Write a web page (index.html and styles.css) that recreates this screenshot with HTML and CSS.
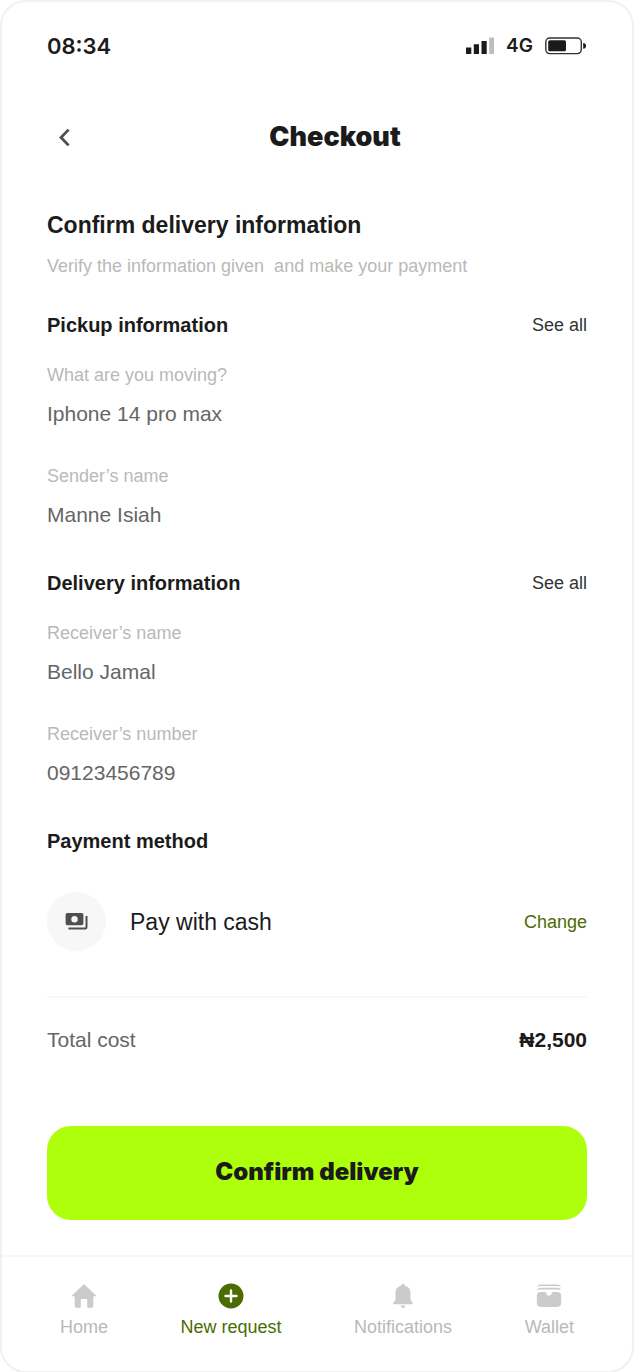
FILE: index.html
```html
<!DOCTYPE html>
<html lang="en">
<head>
<meta charset="utf-8">
<meta name="viewport" content="width=device-width, initial-scale=1">
<title>Checkout</title>
<link rel="stylesheet" href="styles.css">
</head>
<body>
<div class="screen">
  <div class="status">
    <span class="status-time">08:34</span>
    <div class="status-right">
      <svg width="28" height="18" viewBox="0 0 28 18" aria-hidden="true">
        <path fill="#1b1b1b" d="M0 10.5h5.300V17H0zM7.800 7.200h5.200V17H7.800zM15.500 4h5.200v13h-5.200z"/>
        <path fill="#bdbdbd" d="M23.200.5h4.800V17h-4.800z"/>
      </svg>
      <span class="status-net">4G</span>
      <svg width="42" height="18" viewBox="0 0 42 18" aria-hidden="true">
        <rect x=".8" y="1" width="35.500" height="15.600" rx="4" fill="none" stroke="#333" stroke-width="1.400"/>
        <rect x="3.200" y="3.300" width="17.800" height="11" rx="1.600" fill="#1b1b1b"/>
        <path d="M38.200 6q2.800.4 2.800 2.900t-2.800 2.900z" fill="#1b1b1b"/>
      </svg>
    </div>
  </div>

  <header class="topbar">
    <button class="back" type="button" aria-label="Back">
      <svg width="34" height="32" viewBox="0 0 34 32" aria-hidden="true"><path d="M21.600 8.600 14 16.500l7.600 7.900" fill="none" stroke="#4f4f4f" stroke-width="2.800"/></svg>
    </button>
    <span class="title">Checkout</span>
  </header>

  <main class="content">
    <h1 class="heading">Confirm delivery information</h1>
    <p class="intro">Verify the information given&nbsp; and make your payment</p>

    <section class="section">
      <div class="section-head"><h2 class="subheading">Pickup information</h2><a class="link" href="#">See all</a></div>
      <dl class="fields">
        <div class="field"><dt class="label">What are you moving?</dt><dd class="value">Iphone 14 pro max</dd></div>
        <div class="field"><dt class="label">Sender’s name</dt><dd class="value">Manne Isiah</dd></div>
      </dl>
    </section>

    <section class="section">
      <div class="section-head"><h2 class="subheading">Delivery information</h2><a class="link" href="#">See all</a></div>
      <dl class="fields">
        <div class="field"><dt class="label">Receiver’s name</dt><dd class="value">Bello Jamal</dd></div>
        <div class="field"><dt class="label">Receiver’s number</dt><dd class="value">09123456789</dd></div>
      </dl>
    </section>

    <section class="section">
      <h2 class="subheading">Payment method</h2>
      <div class="payment">
        <span class="cash-badge">
          <svg width="24" height="20" viewBox="0 0 24 20" aria-hidden="true">
            <path fill="#4f4f4f" fill-rule="evenodd" d="M2.400 1h14.200q1.800 0 1.800 1.800v8.600q0 1.800-1.800 1.800H2.400Q.6 13.200.6 11.400V2.800Q.6 1 2.400 1zM9.500 4a3.200 3.200 0 1 0 0 6.400 3.200 3.200 0 0 0 0-6.400z"/>
            <path fill="none" stroke="#4f4f4f" stroke-width="2" d="M21.500 4v11.200q0 1.200-1.200 1.200H3.400"/>
          </svg>
        </span>
        <span class="payment-name">Pay with cash</span>
        <button class="change" type="button">Change</button>
      </div>
    </section>

    <div class="total"><span class="value">Total cost</span><strong class="amount">₦2,500</strong></div>

    <button class="confirm" type="button">Confirm delivery</button>
  </main>

  <nav class="tabs">
    <a class="tab" href="#">
      <svg width="26" height="26" viewBox="0 0 26 26" aria-hidden="true"><path fill="#cbcbcb" d="M12.300 1.700q.7-.6 1.400 0L25 12.400q.6.900-.4.900h-2.300v10q0 1.400-1.400 1.400h-3.500q-1.200 0-1.200-1.200v-6.700q0-.8-.8-.8h-4.800q-.8 0-.8.8v6.700q0 1.200-1.200 1.200H5.100q-1.400 0-1.400-1.400v-10H1.400q-1 0-.4-.9z"/></svg>
      <span>Home</span>
    </a>
    <a class="tab tab-active" href="#" aria-current="page">
      <svg width="26" height="26" viewBox="0 0 26 26" aria-hidden="true"><circle cx="13" cy="13" r="12.500" fill="#4b6c03"/><path d="M13 7.500v11M7.500 13h11" stroke="#fff" stroke-width="2.400" stroke-linecap="round"/></svg>
      <span>New request</span>
    </a>
    <a class="tab" href="#">
      <svg width="26" height="26" viewBox="0 0 26 26" aria-hidden="true"><path fill="#cbcbcb" d="M13 .8q1.700 0 1.900 2c3.500.8 5.600 3.700 5.600 7.200v6.500q0 1.200 1.400 2 .8.700.8 2 0 .7-.8.700H4.100q-.8 0-.8-.7 0-1.300.8-2 1.400-.8 1.400-2V10c0-3.500 2.100-6.400 5.600-7.200.2-1.300.8-2 1.900-2zM10.700 22.600h4.600q-.3 2.500-2.300 2.500t-2.300-2.500z"/></svg>
      <span>Notifications</span>
    </a>
    <a class="tab" href="#">
      <svg width="26" height="26" viewBox="0 0 26 26" aria-hidden="true"><path fill="#cbcbcb" d="M1.200 4Q1.500 1.400 4.300 1.400h17.400q2.800 0 3.100 2.600-1.200-.9-3.100-.9H4.300Q2.400 3.100 1.200 4zM1.200 7.400q.3-2.600 3.100-2.600h17.400q2.800 0 3.100 2.600-1.200-.9-3.100-.9H4.300q-1.900 0-3.100.9zM4.800 9h4.400q.8 0 .9 1 .5 2.700 2.900 2.700t2.900-2.700q.1-1 .9-1h4.400q4 0 4 4v6.500q0 4.500-4.500 4.500H5.300Q.8 24 .8 19.500V13q0-4 4-4z"/></svg>
      <span>Wallet</span>
    </a>
  </nav>
</div>
</body>
</html>
```
FILE: styles.css
```css
* { box-sizing: border-box; }

body {
  margin: 0;
  background: #fff;
  color: #1b1b1b;
  font-family: "Liberation Sans", Arial, sans-serif;
}

h1, h2, p, dl, dd { margin: 0; }
a { color: inherit; text-decoration: none; }
svg { display: block; }

button {
  padding: 0;
  border: 0;
  background: none;
  color: inherit;
  font: inherit;
  cursor: pointer;
}

.screen {
  display: flex;
  flex-direction: column;
  min-height: 100vh;
  border: 2px solid #f1f1f1;
  border-radius: 26px;
  background: #fff;
}

.status {
  display: flex;
  align-items: center;
  justify-content: space-between;
  padding: 28px 45px 0;
  line-height: 32px;
  font-family: Inter, sans-serif;
  font-weight: 600;
}
.status-time { font-size: 22px; }
.status-right { display: flex; align-items: center; gap: 12px; }
.status-net { font-size: 19px; }

.topbar {
  display: grid;
  grid-template-columns: 34px 1fr 34px;
  align-items: center;
  margin-top: 59px;
  padding: 0 45px;
}
.title {
  padding-left: 36px;
  text-align: center;
  font: 900 27px/32px Inter, sans-serif;
}

.content {
  display: flex;
  flex-direction: column;
  padding: 56px 45px 35px;
}
.heading { font-size: 23px; line-height: 32px; }
.intro {
  margin-top: 12px;
  color: #b9b9b9;
  font-size: 18px;
  line-height: 26px;
}

.section { margin-top: 40px; }
.intro + .section { margin-top: 32px; }
.section-head {
  display: flex;
  align-items: center;
  justify-content: space-between;
}
.subheading { font-size: 20px; line-height: 28px; }
.link { color: #333; font-size: 18px; line-height: 28px; }

.fields {
  display: flex;
  flex-direction: column;
  gap: 36px;
  margin-top: 24px;
}
.field { display: flex; flex-direction: column; gap: 13px; }
.label { color: #b9b9b9; font-size: 18px; line-height: 24px; }
.value { color: #666; font-size: 21px; line-height: 28px; }

.payment {
  display: flex;
  align-items: center;
  gap: 24px;
  margin-top: 37px;
  padding-bottom: 45px;
  border-bottom: 2px solid #f8f8f8;
}
.cash-badge {
  display: grid;
  place-items: center;
  width: 59px;
  height: 59px;
  border-radius: 50%;
  background: #f7f7f7;
}
.payment-name { flex: 1; font-size: 23px; line-height: 32px; }
.change { color: #4b6c03; font-size: 18px; line-height: 28px; }

.total {
  display: flex;
  align-items: center;
  justify-content: space-between;
  padding: 28px 0 72px;
}
.amount { font-size: 21px; line-height: 28px; }

.confirm {
  padding: 30px 24px 32px;
  border-radius: 24px;
  background: #aeff0c;
  text-align: center;
  font: 900 24px/32px Inter, sans-serif;
}

.tabs {
  display: flex;
  justify-content: space-between;
  margin-top: auto;
  padding: 26px 58px 32px;
  border-top: 2px solid #f8f8f8;
  color: #b9b9b9;
}
.tab {
  display: flex;
  flex-direction: column;
  align-items: center;
  gap: 6px;
  font-size: 18px;
  line-height: 24px;
}
.tab-active { color: #4b6c03; }
```
